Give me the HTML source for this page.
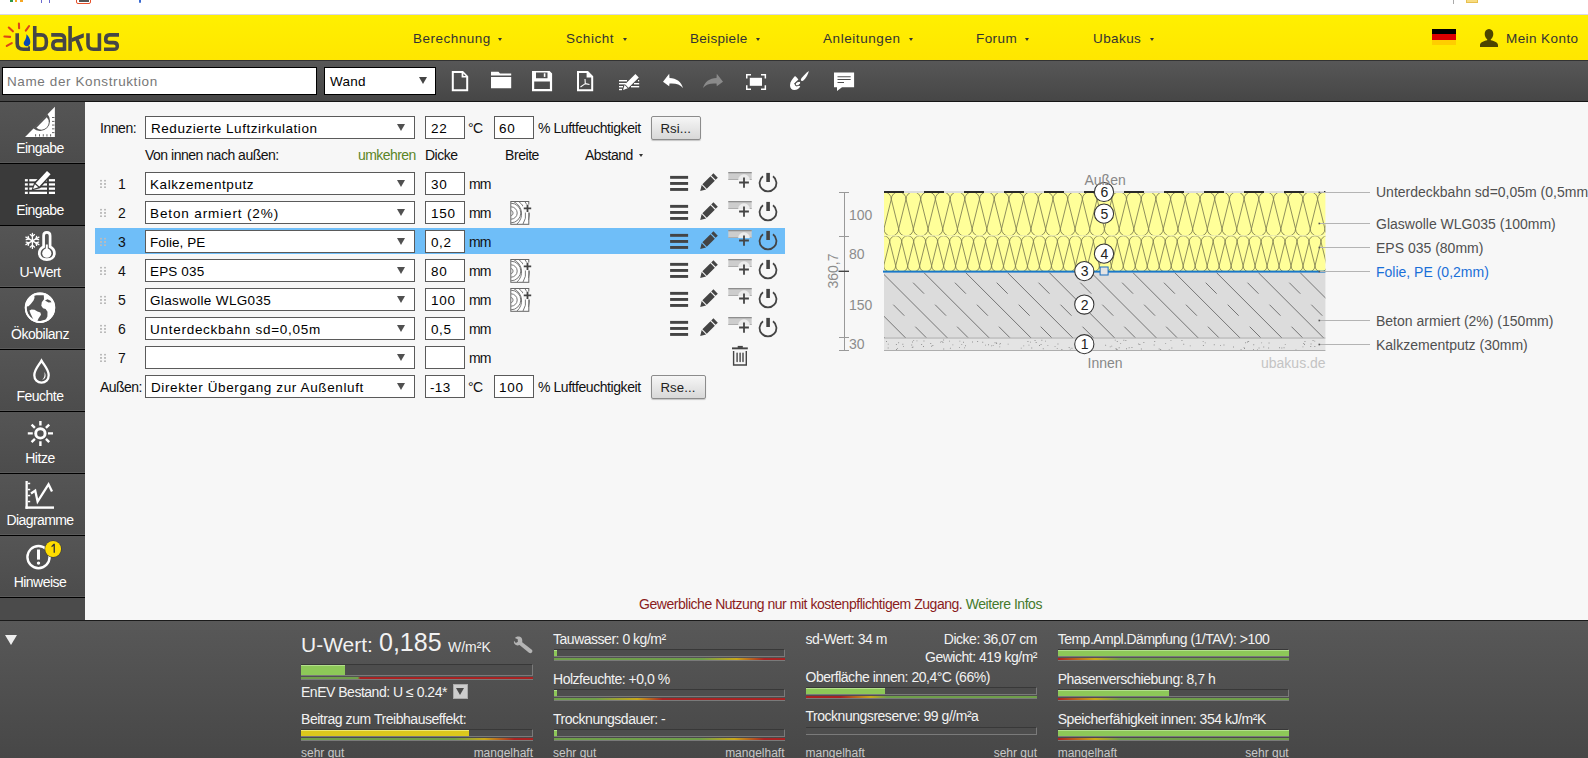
<!DOCTYPE html>
<html><head><meta charset="utf-8">
<style>
*{box-sizing:border-box;margin:0;padding:0}
html,body{width:1588px;height:758px;overflow:hidden;background:#f7f7f7;font-family:"Liberation Sans",sans-serif;position:relative}
.a{position:absolute}
.t{position:absolute;white-space:nowrap;line-height:1}
#top{left:0;top:0;width:1588px;height:15px;background:#fff;border-bottom:1px solid #d8d8e8}
#hdr{left:0;top:15px;width:1588px;height:45px;background:linear-gradient(#fff000,#ffe600)}
#tb{left:0;top:60px;width:1588px;height:42px;background:linear-gradient(#575757,#464646);border-top:1px solid #333;border-bottom:1px solid #151515}
#side{left:0;top:102px;width:85px;height:518px;background:#4b4b4b}
.si{position:absolute;left:0;width:85px;height:62px;background:linear-gradient(#555,#4c4c4c);border-bottom:1px solid #000;box-shadow:inset 0 -1px 0 #5a5a5a}
.si.act{background:#3a3a3a;box-shadow:none}
.sl{position:absolute;left:0;width:80px;text-align:center;color:#fff;font-size:13px;top:40px;line-height:1}
#bot{left:0;top:620px;width:1588px;height:138px;background:linear-gradient(#585858,#474747);border-top:1px solid #1a1a1a}
.nav{color:#333;font-size:13.5px;top:32.4px}
.car{position:absolute;width:0;height:0;border-left:2.5px solid transparent;border-right:2.5px solid transparent;border-top:3.2px solid #333}

.sel{position:absolute;left:145px;width:270px;height:23px;background:#fff;border:1px solid #5a5a5a}
.sel:after{content:"";position:absolute;left:251px;top:7px;width:0;height:0;border-left:4px solid transparent;border-right:4px solid transparent;border-top:7.5px solid #505050}
.inp{position:absolute;width:40px;height:23px;background:#fff;border:1px solid #5a5a5a}
.vd{font-size:13.5px;color:#000}
.ar{font-size:13px;color:#111}
.btn{position:absolute;height:24px;border:1px solid #8c8c8c;border-radius:2px;background:linear-gradient(#f6f6f6,#d8d8d8);box-shadow:0 1px 1px rgba(0,0,0,.2)}
.hl{position:absolute;left:95px;top:228px;width:690px;height:26px;background:#6fbef8}

.bt{color:#f2f2f2;font-size:13px}
.bs{color:#c8c8c8;font-size:12px}
.bar{position:absolute;background:#4d4d4d;border-top:1px solid #383838;border-right:1px solid #7a7a7a;border-bottom:1px solid #7a7a7a}
.fill{position:absolute;left:0;top:0;bottom:0;background:#8dc858;border-top:1px solid #b4e08c}
.gl{position:absolute;height:3px;border-bottom:1px solid #7a7a7a}
</style></head><body>
<div id="top" class="a"></div>
<div id="hdr" class="a"></div>
<div class="a" style="left:10px;top:0;width:2.6px;height:2px;background:#2e9a48"></div>
<div class="a" style="left:14.5px;top:0;width:2.6px;height:2px;background:#f5a623"></div>
<div class="a" style="left:19.8px;top:0;width:3px;height:2px;background:#f5a623"></div>
<div class="a" style="left:41.3px;top:0;width:1px;height:3px;background:#6a6ad0"></div>
<div class="a" style="left:49.4px;top:0;width:1px;height:3px;background:#6a6ad0"></div>
<div class="a" style="left:76.2px;top:-2px;width:15px;height:5.5px;border:1px solid #e8502a;border-radius:2px;background:#fff"></div>
<div class="a" style="left:78.5px;top:0;width:10px;height:1.6px;background:#555"></div>
<div class="a" style="left:139px;top:0;width:1.5px;height:3px;background:#3a6ad0;border-radius:0 0 1px 1px"></div>
<div class="a" style="left:1453px;top:0;width:1px;height:3.5px;background:#aaa"></div>
<div class="a" style="left:1466px;top:0;width:11.7px;height:2.7px;background:#f8dc80;border:1px solid #e8c050;border-top:0"></div>

<div id="tb" class="a"></div>
<div id="side" class="a">
  <div class="si" style="top:0"><div class="sl" id="sl1" style="top:39.15px;font-size:14px;letter-spacing:-0.525px">Eingabe</div></div>
  <div class="si act" style="top:62px"><div class="sl" id="sl2" style="top:39.15px;font-size:14px;letter-spacing:-0.525px">Eingabe</div></div>
  <div class="si" style="top:124px"><div class="sl" id="sl3" style="top:39.15px;font-size:14px;letter-spacing:-0.523px">U-Wert</div></div>
  <div class="si" style="top:186px"><div class="sl" id="sl4" style="top:39.15px;font-size:14px;letter-spacing:-0.495px">Ökobilanz</div></div>
  <div class="si" style="top:248px"><div class="sl" id="sl5" style="top:39.15px;font-size:14px;letter-spacing:-0.516px">Feuchte</div></div>
  <div class="si" style="top:310px"><div class="sl" id="sl6" style="top:39.15px;font-size:14px;letter-spacing:-0.456px">Hitze</div></div>
  <div class="si" style="top:372px"><div class="sl" id="sl7" style="top:39.15px;font-size:14px;letter-spacing:-0.575px">Diagramme</div></div>
  <div class="si" style="top:434px"><div class="sl" id="sl8" style="top:39.15px;font-size:14px;letter-spacing:-0.508px">Hinweise</div></div>
</div>
<div id="bot" class="a"></div>


<svg class="a" style="left:0;top:15px" width="130" height="45" viewBox="0 15 130 45">
 <g stroke="#dc4418" stroke-width="2.1" stroke-linecap="round" fill="none">
  <path d="M18.9 23.6 L19.1 28.2"/><path d="M29.1 26 L25.8 30.6"/><path d="M8.8 27.5 L12.9 31.3"/>
  <path d="M4.4 36.5 L10.1 36.9"/><path d="M6.8 45.9 L11.8 43.1"/>
 </g>
 <g stroke="#464646" stroke-width="3.6" fill="none">
  <path d="M17.2 33.3 V43.5 C17.2 47.8 19.8 49.2 23.5 49.2 H29.9"/>
  <path d="M34.75 26 V50.7"/>
  <path d="M34.75 34.9 H41 C45.5 34.9 46.4 37.5 46.4 42 C46.4 47 45 49.1 41 49.1 H34.75"/>
  <path d="M51.2 34.9 H60 C63.5 34.9 64.5 36.5 64.5 39 V50.7"/>
  <path d="M64.5 40.7 H56.8 C53.6 40.7 52.8 42.5 52.8 45 C52.8 48 54 49.1 57 49.1 H64.5"/>
  <path d="M70.1 26 V50.9"/>
  <path d="M77 39.6 L81.4 50.9"/>
  <path d="M88 33.3 V44 C88 48.3 90 49.2 93.5 49.2 H99.4"/>
  <path d="M99.4 33.3 V50.9"/>
  <path d="M119 34.9 H109.5 C106 34.9 105.7 37.5 105.7 39.2 C105.7 41.7 107 42.6 109.5 42.6 H113.5 C116.8 42.6 117.3 44.2 117.3 46 C117.3 48.4 116.5 49.2 113.5 49.2 H104"/>
 </g>
 <path fill="#464646" d="M28.1 46.3 H29.9 V50.7 H28.1Z M71.9 37.9 L83.8 33.2 L83.8 37.4 L71.9 41.9Z"/>
 <path fill="#0848b4" d="M26.4 34.2 C29 36.5 30.3 39.5 30.3 42 C30.3 44.6 28.8 46.2 27 46.2 C25 46.2 23.7 44.8 23.7 43.2 C23.7 41 26.8 39.5 26.4 34.2Z"/>
</svg>
<div class="a" style="left:1432px;top:29px;width:24px;height:16px;background:linear-gradient(#000 0,#000 33.3%,#dd0000 33.3%,#dd0000 66.6%,#ffce00 66.6%)"></div>
<svg class="a" style="left:1479px;top:28px" width="20" height="20" viewBox="0 0 20 20">
 <path fill="#4d4500" d="M10 1 C12.8 1 14.3 3.2 14.3 6 C14.3 8.6 13 10.6 11.8 11.3 L11.8 12.2 C15.5 13 18.8 14.3 19 17 L19 19 L1 19 L1 17 C1.2 14.3 4.5 13 8.2 12.2 L8.2 11.3 C7 10.6 5.7 8.6 5.7 6 C5.7 3.2 7.2 1 10 1Z"/>
</svg>



<!-- sidebar icons -->
<svg class="a" style="left:0;top:102px" width="85" height="518" viewBox="0 102 85 518">
 <!-- set square -->
 <path fill="#fff" d="M25.1 136.9 L54.9 106.8 V136.9Z"/>
 <path fill="#535353" d="M33.2 128.3 L47.4 114.1 A10.05 10.05 0 0 1 33.2 128.3Z"/>
 <path fill="#fff" d="M36.45 127.67 L46.77 117.35 A7.3 7.3 0 0 1 36.45 127.67Z"/>
 <g fill="#535353">
  <rect x="35.2" y="134.2" width="0.9" height="2.3"/><rect x="39" y="134.2" width="0.9" height="2.3"/><rect x="42.8" y="134.2" width="0.9" height="2.3"/><rect x="46.5" y="134.2" width="0.9" height="2.3"/><rect x="50.2" y="134.2" width="0.9" height="2.3"/>
  <rect x="52" y="117.1" width="2.5" height="0.9"/><rect x="52" y="120.9" width="2.5" height="0.9"/><rect x="52" y="124.6" width="2.5" height="0.9"/><rect x="52" y="128.4" width="2.5" height="0.9"/><rect x="52" y="132.2" width="2.5" height="0.9"/>
 </g>
 <!-- list pencil -->
 <g fill="#fff">
  <rect x="24.9" y="179.1" width="2.9" height="2.3"/><rect x="24.9" y="183.3" width="2.9" height="2.3"/><rect x="24.9" y="187.5" width="2.9" height="2.3"/><rect x="24.9" y="191.7" width="2.9" height="2.3"/>
  <rect x="29.3" y="179.1" width="17.7" height="2.3"/><rect x="29.3" y="183.3" width="17.7" height="2.3"/><rect x="29.3" y="187.5" width="17.7" height="2.3"/><rect x="29.3" y="191.7" width="17.7" height="2.3"/>
  <rect x="48.9" y="179.1" width="6.1" height="2.3"/><rect x="48.9" y="183.3" width="6.1" height="2.3"/><rect x="48.9" y="187.5" width="6.1" height="2.3"/><rect x="48.9" y="191.7" width="6.1" height="2.3"/>
 </g>
 <path fill="#393939" d="M47 169.5 L52.3 174.3 L40 188.2 L31.5 190.6 L34.3 182.3Z"/>
 <path fill="#fff" d="M47 171 L50.6 174.3 L39.3 186.5 L35.7 183.2Z M34.9 184.2 L38.3 187.3 L33 189Z"/>
 <!-- snowflake -->
 <g stroke="#fff" stroke-width="1.3" fill="none" stroke-linecap="round">
  <path d="M32.4 233.4 V248.4 M25.9 237.1 L38.9 244.6 M25.9 244.6 L38.9 237.1"/>
  <path d="M30.3 234.6 L32.4 236.4 L34.5 234.6 M30.3 247.1 L32.4 245.3 L34.5 247.1"/>
  <path d="M26.2 239.6 L28.9 239 L28.2 236.3 M36.6 236.3 L35.9 239 L38.6 239.6"/>
  <path d="M26.2 242.1 L28.9 242.7 L28.2 245.4 M36.6 245.4 L35.9 242.7 L38.6 242.1"/>
 </g>
 <!-- thermometer -->
 <path fill="none" stroke="#fff" stroke-width="2.7" d="M43.6 246.8 V235.7 C43.6 233.3 45 232.4 46.8 232.4 C48.6 232.4 50.1 233.3 50.1 235.7 V246.8 C52.8 248.3 54.4 250.6 54.4 253.2 C54.4 257.2 51 259.6 46.8 259.6 C42.6 259.6 39.3 257.2 39.3 253.2 C39.3 250.6 40.9 248.3 43.6 246.8Z"/>
 <circle cx="46.8" cy="253.2" r="4.6" fill="#fff"/>
 <rect x="45.8" y="244.5" width="2" height="6" fill="#fff"/>
 <!-- globe -->
 <circle cx="40" cy="307.7" r="15.2" fill="#fff"/>
 <path fill="#535353" d="M34.3 295.3 L43.8 295.3 L44 299.3 L41.8 302.2 L41.3 305.8 L43 308.3 L45.6 309 L47.5 311.8 L47.4 316.6 L45.8 319.5 L40 321.3 L37.2 321.5 L38.5 318.6 L41 314.8 L40.4 312.6 L37.5 311.4 L34.5 309.8 L31.5 309.5 L29.5 310.5 L30.5 313.5 L32.5 317.8 L33.5 319.5 L30 317 L27.5 313 L26.5 309 L26.6 306.5 L28.5 306.2 L30.8 304 L33.5 300.5 L34.5 298Z"/>
 <path fill="#535353" d="M45 300.5 L47.5 299.3 L50.5 300.8 L51.5 302.3 L48.5 302.5Z"/>
 <circle cx="40" cy="307.7" r="14.25" fill="none" stroke="#fff" stroke-width="1.9"/>
 <!-- drop -->
 <path fill="none" stroke="#fff" stroke-width="2.3" d="M41.5 360.6 C44 365.2 48.7 369.5 48.7 375.2 C48.7 379.6 45.5 382.7 41.5 382.7 C37.5 382.7 34.3 379.6 34.3 375.2 C34.3 369.5 39 365.2 41.5 360.6Z"/>
 <path fill="#fff" d="M44.4 372 C46.1 374.5 46.4 378.6 42.2 379.8 C44.5 377.8 45 375 44.4 372Z"/>
 <!-- sun -->
 <circle cx="40.4" cy="433.4" r="4.7" fill="none" stroke="#fff" stroke-width="2.9"/>
 <g stroke="#fff" stroke-width="2.4">
  <path d="M40.4 420.9 V425.6 M40.4 441.3 V446.1 M27.8 433.4 H32.8 M48 433.4 H53"/>
  <path d="M31.6 424.6 L34.9 427.9 M45.9 438.9 L49.2 442.2 M49.2 424.6 L45.9 427.9 M34.9 438.9 L31.6 442.2"/>
 </g>
 <!-- chart -->
 <g fill="#fff">
  <rect x="25.5" y="481" width="2.3" height="27.8"/><rect x="25.5" y="506.4" width="28.5" height="2.4"/>
  <rect x="27.8" y="482.7" width="2.4" height="1.5"/><rect x="27.8" y="488.8" width="2.4" height="1.5"/><rect x="27.8" y="494.8" width="2.4" height="1.5"/><rect x="27.8" y="500.8" width="2.4" height="1.5"/>
 </g>
 <path fill="none" stroke="#fff" stroke-width="2.3" stroke-linejoin="miter" d="M31 493.5 L35.2 490.6 L37.6 501.5 L48.5 484.3 L52 491.6"/>
 <!-- warning -->
 <circle cx="38.5" cy="557.1" r="11.1" fill="none" stroke="#fff" stroke-width="2.4"/>
 <rect x="37" y="549.5" width="3" height="10.1" fill="#fff"/>
 <circle cx="38.5" cy="563.1" r="1.7" fill="#fff"/>
 <circle cx="53.1" cy="549" r="8.6" fill="#3a3a3a"/>
 <circle cx="53.1" cy="549" r="8" fill="#ffdd00"/>
 <path fill="#333" d="M53.6 543.8 H54.9 V552.8 H53.6 V546 L51.5 547.3 V545.9Z"/>
</svg>

<!-- toolbar -->
<div class="a" style="left:2px;top:67px;width:315px;height:28px;background:#fff;border:1px solid #000"></div>
<div class="t vd" id="nameph" style="left:7px;top:74.8px;color:#777;letter-spacing:0.606px">Name der Konstruktion</div>
<div class="a" style="left:324px;top:67px;width:112px;height:28px;background:#fff;border:1px solid #000"></div>
<div class="t vd" id="wand" style="left:330px;top:74.8px;color:#000;letter-spacing:0.206px">Wand</div>
<div class="a" style="left:419px;top:77.2px;width:0;height:0;border-left:4.2px solid transparent;border-right:4.2px solid transparent;border-top:7.6px solid #444"></div>
<svg class="a" style="left:440px;top:60px" width="430" height="42" viewBox="440 60 430 42">
 <g fill="#fff">
  <!-- new doc -->
  <path d="M451.8 71 H463 L468.2 76.2 V91.2 H451.8Z M453.8 73 V89.2 H466.2 V77.6 H461.6 V73Z M463.4 73.6 V75.9 H465.7Z" fill-rule="evenodd"/>
  <!-- folder -->
  <path d="M491 71.8 H498.5 L500 73.6 H511.2 V75.6 H491Z M491 77 H511.2 V88.3 H491Z"/>
  <!-- save -->
  <path fill-rule="evenodd" d="M532 71.1 H549.6 L552.1 73.6 V91.2 H532Z M534.2 81.5 V89 H549.9 V81.5Z M536 72.6 V78.2 H547.5 V72.6Z"/>
  <rect x="543.8" y="73.3" width="1.6" height="3.6"/>
  <!-- pdf -->
  <path d="M577 71 H588 L593.2 76.2 V91.2 H577Z M579 73 V89.2 H591.2 V77.6 H586.6 V73Z" fill-rule="evenodd"/>
 </g>
 <g stroke="#fff" fill="none" stroke-width="1.1">
  <path d="M585 79 L585.3 83.6 L580.5 87 M585.3 83.6 L589.5 84.5"/>
 </g>
 <!-- edit lines -->
 <g fill="#fff">
  <rect x="619" y="80" width="8" height="1.4"/><rect x="619" y="83" width="7" height="1.4"/><rect x="619" y="86" width="4" height="1.4"/><rect x="619" y="88.8" width="3" height="1.4"/>
  <rect x="634" y="83" width="5.2" height="1.4"/><rect x="631" y="86" width="8.2" height="1.4"/><rect x="638" y="80" width="1.2" height="1.4"/>
  <path d="M635.4 74 L638.8 77.4 L628.5 87.7 L625.1 84.3Z M624.6 85 L627.8 88.2 L623 89.9Z"/>
  <!-- undo -->
  <path d="M663 81.8 L669.2 73.7 L669.5 77.9 C676.5 78 681.5 82 683 88 C680 84.5 676 83.2 669.5 83.6 L669.2 86.3Z"/>
  <!-- fullscreen -->
  <path d="M746 73.9 H751 V75.4 H747.5 V78.6 H746Z M761 73.9 H766.1 V78.6 H764.6 V75.4 H761Z M746 85.3 H747.5 V88.5 H751 V90 H746Z M764.6 85.3 H766.1 V90 H761 V88.5 H764.6Z"/>
  <rect x="749.8" y="77.8" width="12.2" height="8"/>
  <!-- brush -->
  <path d="M808.9 70.9 C808.3 73.8 806 77.8 803.4 80.6 C802.6 81.4 801.1 81.1 800.9 80.1 C800.8 79.3 801.1 78.6 801.6 78 C803.9 75.3 806.8 72.3 808.9 70.9Z"/>
  <path d="M795 76 C796.8 77.6 798 78.8 798.4 79.6 L794 83.8 L800.3 86.3 C799.3 88.7 797.1 90.1 794.4 90.1 C791.8 90.1 790 88 790 85.3 C790 81.5 792.8 78.5 795 76Z"/>
  <ellipse cx="798" cy="83.5" rx="3" ry="1.9" stroke="#4c4c4c" stroke-width="1" transform="rotate(-30 798 83.5)"/>
  <!-- comment -->
  <path fill-rule="evenodd" d="M834 72.6 H854.1 V87.3 H842 L837 91 V87.3 H834Z M837.5 76.2 V77.3 H850.7 V76.2Z M837.5 79 V80.1 H850.7 V79Z M837.5 82 V83.1 H844 V82Z"/>
 </g>
 <path fill="#8a8a8a" d="M723 81.8 L716.8 73.7 L716.5 77.9 C709.5 78 704.5 82 703 88 C706 84.5 710 83.2 716.5 83.6 L716.8 86.3Z"/>
</svg>

<!-- form -->
<div class="hl"></div>
<div class="t ar" id="lbl_innen" style="left:100px;top:121.15px;font-size:14px;letter-spacing:-0.461px">Innen:</div>
<div class="sel" style="top:116px"></div>
<div class="t vd" id="s_innen" style="left:151px;top:122px;letter-spacing:0.545px">Reduzierte Luftzirkulation</div>
<div class="inp" style="left:425px;top:116px"></div>
<div class="t vd" id="i_22" style="left:431px;top:122px;letter-spacing:0.742px">22</div>
<div class="t ar" id="c1" style="left:468px;top:121.15px;font-size:14px;letter-spacing:-0.562px">°C</div>
<div class="inp" style="left:494px;top:116px"></div>
<div class="t vd" id="i_60" style="left:499px;top:122px;letter-spacing:0.742px">60</div>
<div class="t ar" id="lf1" style="left:538px;top:121.15px;font-size:14px;letter-spacing:-0.439px">% Luftfeuchtigkeit</div>
<div class="btn" style="left:651px;top:116px;width:50px"></div>
<div class="t ar" id="rsi" style="left:660.5px;top:122.3px;font-size:13.2px;letter-spacing:0.1px;color:#222">Rsi...</div>
<div class="t ar" id="vin" style="left:145px;top:148.15px;font-size:14px;letter-spacing:-0.489px">Von innen nach außen:</div>
<div class="t ar" id="umk" style="left:358px;top:148.15px;color:#5b8526;font-size:14px;letter-spacing:-0.557px">umkehren</div>
<div class="t ar" id="dicke" style="left:425px;top:148.15px;font-size:14px;letter-spacing:-0.500px">Dicke</div>
<div class="t ar" id="breite" style="left:505px;top:148.15px;font-size:14px;letter-spacing:-0.435px">Breite</div>
<div class="t ar" id="abstand" style="left:585px;top:148.15px;font-size:14px;letter-spacing:-0.525px">Abstand</div>
<div class="car" style="left:639px;top:154px"></div>
<div class="a" style="left:99px;top:179px;width:8px;height:10px;background-image:radial-gradient(circle,#bbb 0.9px,transparent 1.1px);background-size:4px 3.3px"></div>
<div class="t ar" id="num1" style="left:118px;top:177.15px;font-size:14px;letter-spacing:-0.562px">1</div>
<div class="sel" style="top:172px"></div>
<div class="t vd" id="sname1" style="left:150px;top:178px;letter-spacing:0.582px">Kalkzementputz</div>
<div class="inp" style="left:425px;top:172px"></div>
<div class="t vd" id="val1" style="left:431px;top:178px;letter-spacing:0.742px">30</div>
<div class="t ar" id="mm1" style="left:469px;top:177.15px;font-size:14px;letter-spacing:-0.828px">mm</div>
<div class="a" style="left:99px;top:208px;width:8px;height:10px;background-image:radial-gradient(circle,#bbb 0.9px,transparent 1.1px);background-size:4px 3.3px"></div>
<div class="t ar" id="num2" style="left:118px;top:206.15px;font-size:14px;letter-spacing:-0.562px">2</div>
<div class="sel" style="top:201px"></div>
<div class="t vd" id="sname2" style="left:150px;top:207px;letter-spacing:0.873px">Beton armiert (2%)</div>
<div class="inp" style="left:425px;top:201px"></div>
<div class="t vd" id="val2" style="left:431px;top:207px;letter-spacing:0.754px">150</div>
<div class="t ar" id="mm2" style="left:469px;top:206.15px;font-size:14px;letter-spacing:-0.828px">mm</div>
<div class="a" style="left:99px;top:237px;width:8px;height:10px;background-image:radial-gradient(circle,#bbb 0.9px,transparent 1.1px);background-size:4px 3.3px"></div>
<div class="t ar" id="num3" style="left:118px;top:235.15px;font-size:14px;letter-spacing:-0.562px">3</div>
<div class="sel" style="top:230px"></div>
<div class="t vd" id="sname3" style="left:150px;top:236px;letter-spacing:0.068px">Folie, PE</div>
<div class="inp" style="left:425px;top:230px"></div>
<div class="t vd" id="val3" style="left:431px;top:236px;letter-spacing:0.607px">0,2</div>
<div class="t ar" id="mm3" style="left:469px;top:235.15px;font-size:14px;letter-spacing:-0.828px">mm</div>
<div class="a" style="left:99px;top:266px;width:8px;height:10px;background-image:radial-gradient(circle,#bbb 0.9px,transparent 1.1px);background-size:4px 3.3px"></div>
<div class="t ar" id="num4" style="left:118px;top:264.15px;font-size:14px;letter-spacing:-0.562px">4</div>
<div class="sel" style="top:259px"></div>
<div class="t vd" id="sname4" style="left:150px;top:265px;letter-spacing:0.143px">EPS 035</div>
<div class="inp" style="left:425px;top:259px"></div>
<div class="t vd" id="val4" style="left:431px;top:265px;letter-spacing:0.742px">80</div>
<div class="t ar" id="mm4" style="left:469px;top:264.15px;font-size:14px;letter-spacing:-0.828px">mm</div>
<div class="a" style="left:99px;top:295px;width:8px;height:10px;background-image:radial-gradient(circle,#bbb 0.9px,transparent 1.1px);background-size:4px 3.3px"></div>
<div class="t ar" id="num5" style="left:118px;top:293.15px;font-size:14px;letter-spacing:-0.562px">5</div>
<div class="sel" style="top:288px"></div>
<div class="t vd" id="sname5" style="left:150px;top:294px;letter-spacing:0.353px">Glaswolle WLG035</div>
<div class="inp" style="left:425px;top:288px"></div>
<div class="t vd" id="val5" style="left:431px;top:294px;letter-spacing:0.754px">100</div>
<div class="t ar" id="mm5" style="left:469px;top:293.15px;font-size:14px;letter-spacing:-0.828px">mm</div>
<div class="a" style="left:99px;top:324px;width:8px;height:10px;background-image:radial-gradient(circle,#bbb 0.9px,transparent 1.1px);background-size:4px 3.3px"></div>
<div class="t ar" id="num6" style="left:118px;top:322.15px;font-size:14px;letter-spacing:-0.562px">6</div>
<div class="sel" style="top:317px"></div>
<div class="t vd" id="sname6" style="left:150px;top:323px;letter-spacing:0.728px">Unterdeckbahn sd=0,05m</div>
<div class="inp" style="left:425px;top:317px"></div>
<div class="t vd" id="val6" style="left:431px;top:323px;letter-spacing:0.607px">0,5</div>
<div class="t ar" id="mm6" style="left:469px;top:322.15px;font-size:14px;letter-spacing:-0.828px">mm</div>
<div class="a" style="left:99px;top:353px;width:8px;height:10px;background-image:radial-gradient(circle,#bbb 0.9px,transparent 1.1px);background-size:4px 3.3px"></div>
<div class="t ar" id="num7" style="left:118px;top:351.15px;font-size:14px;letter-spacing:-0.562px">7</div>
<div class="sel" style="top:346px"></div>
<div class="inp" style="left:425px;top:346px"></div>
<div class="t ar" id="mm7" style="left:469px;top:351.15px;font-size:14px;letter-spacing:-0.828px">mm</div>
<div class="t ar" id="lbl_aussen" style="left:100px;top:380.15px;font-size:14px;letter-spacing:-0.536px">Außen:</div>
<div class="sel" style="top:375px"></div>
<div class="t vd" id="s_aussen" style="left:151px;top:381px;letter-spacing:0.625px">Direkter Übergang zur Außenluft</div>
<div class="inp" style="left:425px;top:375px"></div>
<div class="t vd" id="i_m13" style="left:430px;top:381px;letter-spacing:0.328px">-13</div>
<div class="t ar" id="c2" style="left:468px;top:380.15px;font-size:14px;letter-spacing:-0.562px">°C</div>
<div class="inp" style="left:494px;top:375px"></div>
<div class="t vd" id="i_100" style="left:499px;top:381px;letter-spacing:0.754px">100</div>
<div class="t ar" id="lf2" style="left:538px;top:380.15px;font-size:14px;letter-spacing:-0.439px">% Luftfeuchtigkeit</div>
<div class="btn" style="left:651px;top:375px;width:55px"></div>
<div class="t ar" id="rse" style="left:660.5px;top:381.3px;font-size:13.2px;letter-spacing:0.1px;color:#222">Rse...</div>

<svg width="0" height="0" style="position:absolute">
 <defs>
  <g id="ic_ham" fill="#444"><rect x="670.1" y="175.9" width="18" height="2.9"/><rect x="670.1" y="182" width="18" height="2.9"/><rect x="670.1" y="188" width="18" height="2.9"/></g>
  <g id="ic_pen" fill="#444"><path d="M700.20 190.90 L706.07 189.42 L701.68 185.03Z M706.78 188.71 L714.84 180.65 L710.45 176.26 L702.39 184.32Z M715.61 179.87 L717.81 177.68 L713.42 173.29 L711.23 175.49Z"/></g>
  <g id="ic_ins">
   <rect x="728.3" y="172.2" width="23.4" height="7.7" fill="#cdcdcd"/>
   <rect x="728.3" y="172" width="23.4" height="1.3" fill="#8e8e8e"/>
   <rect x="728.3" y="179" width="23.4" height="0.9" fill="#aaa"/>
   <path d="M738.2 180 A5.8 5.8 0 0 1 749.8 180Z" fill="#ececec"/>
   <path d="M739.1 182.5 H748.9 M744 177.4 V187.8" stroke="#444" stroke-width="1.8"/>
  </g>
  <g id="ic_pow" fill="none" stroke="#444" stroke-width="1.8">
   <path d="M763 176.3 A8.4 8.4 0 1 0 773 176.3"/>
   <rect x="766.3" y="172.9" width="3.6" height="9.1" fill="#444" stroke="none"/>
  </g>
  <g id="ic_wood">
   <rect x="510.8" y="201.5" width="18" height="22.8" fill="#fff" stroke="#666" stroke-width="1"/>
   <g fill="none" stroke="#777" stroke-width="1">
    <path d="M511 210.5 A2.6 2.6 0 0 1 511 215.6"/>
    <path d="M511 206.8 A6.2 6.2 0 0 1 511 219.2"/>
    <path d="M511 203.2 A9.8 9.8 0 0 1 511 222.8"/>
    <path d="M514 201.8 A13.4 13.4 0 0 1 517 224"/>
    <path d="M519 201.8 A16.5 16.5 0 0 1 523 224"/>
    <path d="M525 201.8 A20 20 0 0 1 528.5 220"/>
   </g>
   <rect x="523" y="204.5" width="8" height="8" fill="#f7f7f7"/>
   <path d="M523.8 208.4 H531.2 M527.5 204.7 V212.1" stroke="#444" stroke-width="1.8"/>
  </g>
 </defs>
</svg>
<svg class="a" style="left:0;top:0" width="1588" height="758" viewBox="0 0 1588 758">
<g transform="translate(0,0)"><use href="#ic_ham"/><use href="#ic_pen"/><use href="#ic_ins"/><use href="#ic_pow"/></g>
<g transform="translate(0,29)"><use href="#ic_ham"/><use href="#ic_pen"/><use href="#ic_ins"/><use href="#ic_pow"/></g>
<g transform="translate(0,58)"><use href="#ic_ham"/><use href="#ic_pen"/><use href="#ic_ins"/><use href="#ic_pow"/></g>
<g transform="translate(0,87)"><use href="#ic_ham"/><use href="#ic_pen"/><use href="#ic_ins"/><use href="#ic_pow"/></g>
<g transform="translate(0,116)"><use href="#ic_ham"/><use href="#ic_pen"/><use href="#ic_ins"/><use href="#ic_pow"/></g>
<g transform="translate(0,145)"><use href="#ic_ham"/><use href="#ic_pen"/><use href="#ic_ins"/><use href="#ic_pow"/></g>
<use href="#ic_wood" transform="translate(0,0)"/>
<use href="#ic_wood" transform="translate(0,58)"/>
<use href="#ic_wood" transform="translate(0,87)"/>
<g fill="#444"><rect x="732" y="347.4" width="15.8" height="1.9"/><rect x="737.7" y="345.9" width="5.1" height="2"/>
<path fill-rule="evenodd" d="M732.9 351 H734.3 V364.3 H745.6 V351 H747 V365.7 H732.9Z"/>
<rect x="736.4" y="352.4" width="1.4" height="9.8" rx="0.7"/><rect x="739.4" y="352.4" width="1.4" height="9.8" rx="0.7"/><rect x="742.3" y="352.4" width="1.4" height="9.8" rx="0.7"/></g>
</svg>
<!-- diagram -->
<svg class="a" style="left:800px;top:160px" width="788" height="220" viewBox="800 160 788 220">
<defs><clipPath id="cg"><rect x="884" y="192.8" width="441.4" height="43"/></clipPath><clipPath id="ce"><rect x="884" y="235.8" width="441.4" height="35.2"/></clipPath><clipPath id="cc"><rect x="884" y="272.5" width="441.4" height="65.5"/></clipPath></defs>
<rect x="884" y="192" width="441.4" height="80" fill="#ffff99"/>
<rect x="884" y="272" width="441.4" height="66" fill="#dcdcdc"/>
<rect x="884" y="338" width="441.4" height="12.6" fill="#e4e4e4"/>
<path clip-path="url(#cg)" fill="none" stroke="#7c7c52" stroke-width="0.85" d="M861.90 199.2 A7.35 7.35 0 0 1 876.60 199.2 M854.55 228.8 A7.35 7.35 0 0 0 869.25 228.8 M854.55 228.8 L861.90 199.2 L869.25 228.8 M876.60 199.2 A7.35 7.35 0 0 1 891.30 199.2 M869.25 228.8 A7.35 7.35 0 0 0 883.95 228.8 M869.25 228.8 L876.60 199.2 L883.95 228.8 M891.30 199.2 A7.35 7.35 0 0 1 906.00 199.2 M883.95 228.8 A7.35 7.35 0 0 0 898.65 228.8 M883.95 228.8 L891.30 199.2 L898.65 228.8 M906.00 199.2 A7.35 7.35 0 0 1 920.70 199.2 M898.65 228.8 A7.35 7.35 0 0 0 913.35 228.8 M898.65 228.8 L906.00 199.2 L913.35 228.8 M920.70 199.2 A7.35 7.35 0 0 1 935.40 199.2 M913.35 228.8 A7.35 7.35 0 0 0 928.05 228.8 M913.35 228.8 L920.70 199.2 L928.05 228.8 M935.40 199.2 A7.35 7.35 0 0 1 950.10 199.2 M928.05 228.8 A7.35 7.35 0 0 0 942.75 228.8 M928.05 228.8 L935.40 199.2 L942.75 228.8 M950.10 199.2 A7.35 7.35 0 0 1 964.80 199.2 M942.75 228.8 A7.35 7.35 0 0 0 957.45 228.8 M942.75 228.8 L950.10 199.2 L957.45 228.8 M964.80 199.2 A7.35 7.35 0 0 1 979.50 199.2 M957.45 228.8 A7.35 7.35 0 0 0 972.15 228.8 M957.45 228.8 L964.80 199.2 L972.15 228.8 M979.50 199.2 A7.35 7.35 0 0 1 994.20 199.2 M972.15 228.8 A7.35 7.35 0 0 0 986.85 228.8 M972.15 228.8 L979.50 199.2 L986.85 228.8 M994.20 199.2 A7.35 7.35 0 0 1 1008.90 199.2 M986.85 228.8 A7.35 7.35 0 0 0 1001.55 228.8 M986.85 228.8 L994.20 199.2 L1001.55 228.8 M1008.90 199.2 A7.35 7.35 0 0 1 1023.60 199.2 M1001.55 228.8 A7.35 7.35 0 0 0 1016.25 228.8 M1001.55 228.8 L1008.90 199.2 L1016.25 228.8 M1023.60 199.2 A7.35 7.35 0 0 1 1038.30 199.2 M1016.25 228.8 A7.35 7.35 0 0 0 1030.95 228.8 M1016.25 228.8 L1023.60 199.2 L1030.95 228.8 M1038.30 199.2 A7.35 7.35 0 0 1 1053.00 199.2 M1030.95 228.8 A7.35 7.35 0 0 0 1045.65 228.8 M1030.95 228.8 L1038.30 199.2 L1045.65 228.8 M1053.00 199.2 A7.35 7.35 0 0 1 1067.70 199.2 M1045.65 228.8 A7.35 7.35 0 0 0 1060.35 228.8 M1045.65 228.8 L1053.00 199.2 L1060.35 228.8 M1067.70 199.2 A7.35 7.35 0 0 1 1082.40 199.2 M1060.35 228.8 A7.35 7.35 0 0 0 1075.05 228.8 M1060.35 228.8 L1067.70 199.2 L1075.05 228.8 M1082.40 199.2 A7.35 7.35 0 0 1 1097.10 199.2 M1075.05 228.8 A7.35 7.35 0 0 0 1089.75 228.8 M1075.05 228.8 L1082.40 199.2 L1089.75 228.8 M1097.10 199.2 A7.35 7.35 0 0 1 1111.80 199.2 M1089.75 228.8 A7.35 7.35 0 0 0 1104.45 228.8 M1089.75 228.8 L1097.10 199.2 L1104.45 228.8 M1111.80 199.2 A7.35 7.35 0 0 1 1126.50 199.2 M1104.45 228.8 A7.35 7.35 0 0 0 1119.15 228.8 M1104.45 228.8 L1111.80 199.2 L1119.15 228.8 M1126.50 199.2 A7.35 7.35 0 0 1 1141.20 199.2 M1119.15 228.8 A7.35 7.35 0 0 0 1133.85 228.8 M1119.15 228.8 L1126.50 199.2 L1133.85 228.8 M1141.20 199.2 A7.35 7.35 0 0 1 1155.90 199.2 M1133.85 228.8 A7.35 7.35 0 0 0 1148.55 228.8 M1133.85 228.8 L1141.20 199.2 L1148.55 228.8 M1155.90 199.2 A7.35 7.35 0 0 1 1170.60 199.2 M1148.55 228.8 A7.35 7.35 0 0 0 1163.25 228.8 M1148.55 228.8 L1155.90 199.2 L1163.25 228.8 M1170.60 199.2 A7.35 7.35 0 0 1 1185.30 199.2 M1163.25 228.8 A7.35 7.35 0 0 0 1177.95 228.8 M1163.25 228.8 L1170.60 199.2 L1177.95 228.8 M1185.30 199.2 A7.35 7.35 0 0 1 1200.00 199.2 M1177.95 228.8 A7.35 7.35 0 0 0 1192.65 228.8 M1177.95 228.8 L1185.30 199.2 L1192.65 228.8 M1200.00 199.2 A7.35 7.35 0 0 1 1214.70 199.2 M1192.65 228.8 A7.35 7.35 0 0 0 1207.35 228.8 M1192.65 228.8 L1200.00 199.2 L1207.35 228.8 M1214.70 199.2 A7.35 7.35 0 0 1 1229.40 199.2 M1207.35 228.8 A7.35 7.35 0 0 0 1222.05 228.8 M1207.35 228.8 L1214.70 199.2 L1222.05 228.8 M1229.40 199.2 A7.35 7.35 0 0 1 1244.10 199.2 M1222.05 228.8 A7.35 7.35 0 0 0 1236.75 228.8 M1222.05 228.8 L1229.40 199.2 L1236.75 228.8 M1244.10 199.2 A7.35 7.35 0 0 1 1258.80 199.2 M1236.75 228.8 A7.35 7.35 0 0 0 1251.45 228.8 M1236.75 228.8 L1244.10 199.2 L1251.45 228.8 M1258.80 199.2 A7.35 7.35 0 0 1 1273.50 199.2 M1251.45 228.8 A7.35 7.35 0 0 0 1266.15 228.8 M1251.45 228.8 L1258.80 199.2 L1266.15 228.8 M1273.50 199.2 A7.35 7.35 0 0 1 1288.20 199.2 M1266.15 228.8 A7.35 7.35 0 0 0 1280.85 228.8 M1266.15 228.8 L1273.50 199.2 L1280.85 228.8 M1288.20 199.2 A7.35 7.35 0 0 1 1302.90 199.2 M1280.85 228.8 A7.35 7.35 0 0 0 1295.55 228.8 M1280.85 228.8 L1288.20 199.2 L1295.55 228.8 M1302.90 199.2 A7.35 7.35 0 0 1 1317.60 199.2 M1295.55 228.8 A7.35 7.35 0 0 0 1310.25 228.8 M1295.55 228.8 L1302.90 199.2 L1310.25 228.8 M1317.60 199.2 A7.35 7.35 0 0 1 1332.30 199.2 M1310.25 228.8 A7.35 7.35 0 0 0 1324.95 228.8 M1310.25 228.8 L1317.60 199.2 L1324.95 228.8 M1332.30 199.2 A7.35 7.35 0 0 1 1347.00 199.2 M1324.95 228.8 A7.35 7.35 0 0 0 1339.65 228.8 M1324.95 228.8 L1332.30 199.2 L1339.65 228.8"/>
<path clip-path="url(#ce)" fill="none" stroke="#7c7c52" stroke-width="0.85" d="M865.74 241.8 A5.99 5.99 0 0 1 877.72 241.8 M859.75 265.8 A5.99 5.99 0 0 0 871.73 265.8 M859.75 265.8 L865.74 241.8 L871.73 265.8 M877.72 241.8 A5.99 5.99 0 0 1 889.70 241.8 M871.73 265.8 A5.99 5.99 0 0 0 883.71 265.8 M871.73 265.8 L877.72 241.8 L883.71 265.8 M889.70 241.8 A5.99 5.99 0 0 1 901.68 241.8 M883.71 265.8 A5.99 5.99 0 0 0 895.69 265.8 M883.71 265.8 L889.70 241.8 L895.69 265.8 M901.68 241.8 A5.99 5.99 0 0 1 913.66 241.8 M895.69 265.8 A5.99 5.99 0 0 0 907.67 265.8 M895.69 265.8 L901.68 241.8 L907.67 265.8 M913.66 241.8 A5.99 5.99 0 0 1 925.64 241.8 M907.67 265.8 A5.99 5.99 0 0 0 919.65 265.8 M907.67 265.8 L913.66 241.8 L919.65 265.8 M925.64 241.8 A5.99 5.99 0 0 1 937.62 241.8 M919.65 265.8 A5.99 5.99 0 0 0 931.63 265.8 M919.65 265.8 L925.64 241.8 L931.63 265.8 M937.62 241.8 A5.99 5.99 0 0 1 949.60 241.8 M931.63 265.8 A5.99 5.99 0 0 0 943.61 265.8 M931.63 265.8 L937.62 241.8 L943.61 265.8 M949.60 241.8 A5.99 5.99 0 0 1 961.58 241.8 M943.61 265.8 A5.99 5.99 0 0 0 955.59 265.8 M943.61 265.8 L949.60 241.8 L955.59 265.8 M961.58 241.8 A5.99 5.99 0 0 1 973.56 241.8 M955.59 265.8 A5.99 5.99 0 0 0 967.57 265.8 M955.59 265.8 L961.58 241.8 L967.57 265.8 M973.56 241.8 A5.99 5.99 0 0 1 985.54 241.8 M967.57 265.8 A5.99 5.99 0 0 0 979.55 265.8 M967.57 265.8 L973.56 241.8 L979.55 265.8 M985.54 241.8 A5.99 5.99 0 0 1 997.52 241.8 M979.55 265.8 A5.99 5.99 0 0 0 991.53 265.8 M979.55 265.8 L985.54 241.8 L991.53 265.8 M997.52 241.8 A5.99 5.99 0 0 1 1009.50 241.8 M991.53 265.8 A5.99 5.99 0 0 0 1003.51 265.8 M991.53 265.8 L997.52 241.8 L1003.51 265.8 M1009.50 241.8 A5.99 5.99 0 0 1 1021.48 241.8 M1003.51 265.8 A5.99 5.99 0 0 0 1015.49 265.8 M1003.51 265.8 L1009.50 241.8 L1015.49 265.8 M1021.48 241.8 A5.99 5.99 0 0 1 1033.46 241.8 M1015.49 265.8 A5.99 5.99 0 0 0 1027.47 265.8 M1015.49 265.8 L1021.48 241.8 L1027.47 265.8 M1033.46 241.8 A5.99 5.99 0 0 1 1045.44 241.8 M1027.47 265.8 A5.99 5.99 0 0 0 1039.45 265.8 M1027.47 265.8 L1033.46 241.8 L1039.45 265.8 M1045.44 241.8 A5.99 5.99 0 0 1 1057.42 241.8 M1039.45 265.8 A5.99 5.99 0 0 0 1051.43 265.8 M1039.45 265.8 L1045.44 241.8 L1051.43 265.8 M1057.42 241.8 A5.99 5.99 0 0 1 1069.40 241.8 M1051.43 265.8 A5.99 5.99 0 0 0 1063.41 265.8 M1051.43 265.8 L1057.42 241.8 L1063.41 265.8 M1069.40 241.8 A5.99 5.99 0 0 1 1081.38 241.8 M1063.41 265.8 A5.99 5.99 0 0 0 1075.39 265.8 M1063.41 265.8 L1069.40 241.8 L1075.39 265.8 M1081.38 241.8 A5.99 5.99 0 0 1 1093.36 241.8 M1075.39 265.8 A5.99 5.99 0 0 0 1087.37 265.8 M1075.39 265.8 L1081.38 241.8 L1087.37 265.8 M1093.36 241.8 A5.99 5.99 0 0 1 1105.34 241.8 M1087.37 265.8 A5.99 5.99 0 0 0 1099.35 265.8 M1087.37 265.8 L1093.36 241.8 L1099.35 265.8 M1105.34 241.8 A5.99 5.99 0 0 1 1117.32 241.8 M1099.35 265.8 A5.99 5.99 0 0 0 1111.33 265.8 M1099.35 265.8 L1105.34 241.8 L1111.33 265.8 M1117.32 241.8 A5.99 5.99 0 0 1 1129.30 241.8 M1111.33 265.8 A5.99 5.99 0 0 0 1123.31 265.8 M1111.33 265.8 L1117.32 241.8 L1123.31 265.8 M1129.30 241.8 A5.99 5.99 0 0 1 1141.28 241.8 M1123.31 265.8 A5.99 5.99 0 0 0 1135.29 265.8 M1123.31 265.8 L1129.30 241.8 L1135.29 265.8 M1141.28 241.8 A5.99 5.99 0 0 1 1153.26 241.8 M1135.29 265.8 A5.99 5.99 0 0 0 1147.27 265.8 M1135.29 265.8 L1141.28 241.8 L1147.27 265.8 M1153.26 241.8 A5.99 5.99 0 0 1 1165.24 241.8 M1147.27 265.8 A5.99 5.99 0 0 0 1159.25 265.8 M1147.27 265.8 L1153.26 241.8 L1159.25 265.8 M1165.24 241.8 A5.99 5.99 0 0 1 1177.22 241.8 M1159.25 265.8 A5.99 5.99 0 0 0 1171.23 265.8 M1159.25 265.8 L1165.24 241.8 L1171.23 265.8 M1177.22 241.8 A5.99 5.99 0 0 1 1189.20 241.8 M1171.23 265.8 A5.99 5.99 0 0 0 1183.21 265.8 M1171.23 265.8 L1177.22 241.8 L1183.21 265.8 M1189.20 241.8 A5.99 5.99 0 0 1 1201.18 241.8 M1183.21 265.8 A5.99 5.99 0 0 0 1195.19 265.8 M1183.21 265.8 L1189.20 241.8 L1195.19 265.8 M1201.18 241.8 A5.99 5.99 0 0 1 1213.16 241.8 M1195.19 265.8 A5.99 5.99 0 0 0 1207.17 265.8 M1195.19 265.8 L1201.18 241.8 L1207.17 265.8 M1213.16 241.8 A5.99 5.99 0 0 1 1225.14 241.8 M1207.17 265.8 A5.99 5.99 0 0 0 1219.15 265.8 M1207.17 265.8 L1213.16 241.8 L1219.15 265.8 M1225.14 241.8 A5.99 5.99 0 0 1 1237.12 241.8 M1219.15 265.8 A5.99 5.99 0 0 0 1231.13 265.8 M1219.15 265.8 L1225.14 241.8 L1231.13 265.8 M1237.12 241.8 A5.99 5.99 0 0 1 1249.10 241.8 M1231.13 265.8 A5.99 5.99 0 0 0 1243.11 265.8 M1231.13 265.8 L1237.12 241.8 L1243.11 265.8 M1249.10 241.8 A5.99 5.99 0 0 1 1261.08 241.8 M1243.11 265.8 A5.99 5.99 0 0 0 1255.09 265.8 M1243.11 265.8 L1249.10 241.8 L1255.09 265.8 M1261.08 241.8 A5.99 5.99 0 0 1 1273.06 241.8 M1255.09 265.8 A5.99 5.99 0 0 0 1267.07 265.8 M1255.09 265.8 L1261.08 241.8 L1267.07 265.8 M1273.06 241.8 A5.99 5.99 0 0 1 1285.04 241.8 M1267.07 265.8 A5.99 5.99 0 0 0 1279.05 265.8 M1267.07 265.8 L1273.06 241.8 L1279.05 265.8 M1285.04 241.8 A5.99 5.99 0 0 1 1297.02 241.8 M1279.05 265.8 A5.99 5.99 0 0 0 1291.03 265.8 M1279.05 265.8 L1285.04 241.8 L1291.03 265.8 M1297.02 241.8 A5.99 5.99 0 0 1 1309.00 241.8 M1291.03 265.8 A5.99 5.99 0 0 0 1303.01 265.8 M1291.03 265.8 L1297.02 241.8 L1303.01 265.8 M1309.00 241.8 A5.99 5.99 0 0 1 1320.98 241.8 M1303.01 265.8 A5.99 5.99 0 0 0 1314.99 265.8 M1303.01 265.8 L1309.00 241.8 L1314.99 265.8 M1320.98 241.8 A5.99 5.99 0 0 1 1332.96 241.8 M1314.99 265.8 A5.99 5.99 0 0 0 1326.97 265.8 M1314.99 265.8 L1320.98 241.8 L1326.97 265.8 M1332.96 241.8 A5.99 5.99 0 0 1 1344.94 241.8 M1326.97 265.8 A5.99 5.99 0 0 0 1338.95 265.8 M1326.97 265.8 L1332.96 241.8 L1338.95 265.8"/>
<rect x="884" y="235.4" width="441.4" height="0.8" fill="#ffffc8"/>
<path clip-path="url(#cc)" fill="none" stroke="#5a5a5a" stroke-width="0.8" d="M756.6 272.5 L822.1 338 M798.4 272.5 L863.9 338 M840.2 272.5 L905.7 338 M882.0 272.5 L947.5 338 M923.8 272.5 L989.3 338 M965.6 272.5 L1031.1 338 M1007.4 272.5 L1072.9 338 M1049.2 272.5 L1114.7 338 M1091.0 272.5 L1156.5 338 M1132.8 272.5 L1198.3 338 M1174.6 272.5 L1240.1 338 M1216.4 272.5 L1281.9 338 M1258.2 272.5 L1323.7 338 M1300.0 272.5 L1365.5 338 M1341.8 272.5 L1407.3 338 M1383.6 272.5 L1449.1 338 M1425.4 272.5 L1490.9 338 M787.7 282.7 L798.7 293.7 M809.7 304.7 L820.7 315.7 M831.7 326.7 L842.7 337.7 M829.5 282.7 L840.5 293.7 M851.5 304.7 L862.5 315.7 M873.5 326.7 L884.5 337.7 M871.3 282.7 L882.3 293.7 M893.3 304.7 L904.3 315.7 M915.3 326.7 L926.3 337.7 M913.1 282.7 L924.1 293.7 M935.1 304.7 L946.1 315.7 M957.1 326.7 L968.1 337.7 M954.9 282.7 L965.9 293.7 M976.9 304.7 L987.9 315.7 M998.9 326.7 L1009.9 337.7 M996.7 282.7 L1007.7 293.7 M1018.7 304.7 L1029.7 315.7 M1040.7 326.7 L1051.7 337.7 M1038.5 282.7 L1049.5 293.7 M1060.5 304.7 L1071.5 315.7 M1082.5 326.7 L1093.5 337.7 M1080.3 282.7 L1091.3 293.7 M1102.3 304.7 L1113.3 315.7 M1124.3 326.7 L1135.3 337.7 M1122.1 282.7 L1133.1 293.7 M1144.1 304.7 L1155.1 315.7 M1166.1 326.7 L1177.1 337.7 M1163.9 282.7 L1174.9 293.7 M1185.9 304.7 L1196.9 315.7 M1207.9 326.7 L1218.9 337.7 M1205.7 282.7 L1216.7 293.7 M1227.7 304.7 L1238.7 315.7 M1249.7 326.7 L1260.7 337.7 M1247.5 282.7 L1258.5 293.7 M1269.5 304.7 L1280.5 315.7 M1291.5 326.7 L1302.5 337.7 M1289.3 282.7 L1300.3 293.7 M1311.3 304.7 L1322.3 315.7 M1333.3 326.7 L1344.3 337.7 M1331.1 282.7 L1342.1 293.7 M1353.1 304.7 L1364.1 315.7 M1375.1 326.7 L1386.1 337.7 M1372.9 282.7 L1383.9 293.7 M1394.9 304.7 L1405.9 315.7 M1416.9 326.7 L1427.9 337.7 M1414.7 282.7 L1425.7 293.7 M1436.7 304.7 L1447.7 315.7 M1458.7 326.7 L1469.7 337.7 M1456.5 282.7 L1467.5 293.7 M1478.5 304.7 L1489.5 315.7 M1500.5 326.7 L1511.5 337.7"/>
<path fill="#8a8a8a" d="M1027.5 341.0h0.9v0.9h-0.9z M1170.5 340.2h0.9v0.9h-0.9z M1120.2 343.2h0.9v0.9h-0.9z M911.3 344.6h0.9v0.9h-0.9z M902.4 343.8h0.9v0.9h-0.9z M916.5 340.4h0.9v0.9h-0.9z M1071.5 347.8h0.9v0.9h-0.9z M940.1 341.7h0.9v0.9h-0.9z M1160.2 349.0h0.9v0.9h-0.9z M1138.2 343.5h0.9v0.9h-0.9z M1312.6 340.0h0.9v0.9h-0.9z M1261.2 342.4h0.9v0.9h-0.9z M949.0 340.7h0.9v0.9h-0.9z M1020.8 347.7h0.9v0.9h-0.9z M965.0 345.3h0.9v0.9h-0.9z M1165.2 343.2h0.9v0.9h-0.9z M1125.4 340.1h0.9v0.9h-0.9z M912.0 341.6h0.9v0.9h-0.9z M1183.3 343.8h0.9v0.9h-0.9z M1023.3 345.4h0.9v0.9h-0.9z M1084.0 342.5h0.9v0.9h-0.9z M1233.1 346.5h0.9v0.9h-0.9z M992.7 345.2h0.9v0.9h-0.9z M1115.5 348.3h0.9v0.9h-0.9z M1204.8 342.4h0.9v0.9h-0.9z M1314.3 340.7h0.9v0.9h-0.9z M1068.7 347.1h0.9v0.9h-0.9z M952.4 344.4h0.9v0.9h-0.9z M903.1 346.2h0.9v0.9h-0.9z M1220.1 345.2h0.9v0.9h-0.9z M1268.6 342.6h0.9v0.9h-0.9z M1189.8 345.4h0.9v0.9h-0.9z M1139.4 344.1h0.9v0.9h-0.9z M1253.1 348.9h0.9v0.9h-0.9z M1093.2 346.1h0.9v0.9h-0.9z M912.5 346.5h0.9v0.9h-0.9z M1168.8 349.4h0.9v0.9h-0.9z M1245.2 342.3h0.9v0.9h-0.9z M1054.6 346.2h0.9v0.9h-0.9z M895.9 344.1h0.9v0.9h-0.9z M959.4 340.7h0.9v0.9h-0.9z M911.8 347.2h0.9v0.9h-0.9z M942.5 342.0h0.9v0.9h-0.9z M1056.8 348.2h0.9v0.9h-0.9z M921.2 344.0h0.9v0.9h-0.9z M1126.1 348.3h0.9v0.9h-0.9z M1244.0 348.1h0.9v0.9h-0.9z M1007.7 343.7h0.9v0.9h-0.9z M1042.8 348.3h0.9v0.9h-0.9z M1304.5 341.0h0.9v0.9h-0.9z M963.0 341.8h0.9v0.9h-0.9z M988.0 344.3h0.9v0.9h-0.9z M1143.4 342.1h0.9v0.9h-0.9z M887.8 343.7h0.9v0.9h-0.9z M1047.4 345.2h0.9v0.9h-0.9z M1302.5 346.4h0.9v0.9h-0.9z M1111.3 345.7h0.9v0.9h-0.9z M1181.5 340.0h0.9v0.9h-0.9z M1279.1 347.3h0.9v0.9h-0.9z M1268.2 347.5h0.9v0.9h-0.9z M1057.5 343.5h0.9v0.9h-0.9z M931.2 345.8h0.9v0.9h-0.9z M913.2 340.2h0.9v0.9h-0.9z M977.2 341.1h0.9v0.9h-0.9z M1034.6 340.0h0.9v0.9h-0.9z M886.1 341.0h0.9v0.9h-0.9z M930.3 343.1h0.9v0.9h-0.9z M897.1 348.2h0.9v0.9h-0.9z M1154.3 341.0h0.9v0.9h-0.9z M996.2 343.0h0.9v0.9h-0.9z M1045.1 340.7h0.9v0.9h-0.9z M1257.0 349.4h0.9v0.9h-0.9z M1089.6 344.3h0.9v0.9h-0.9z M923.5 340.5h0.9v0.9h-0.9z M1035.7 342.1h0.9v0.9h-0.9z M1248.2 341.1h0.9v0.9h-0.9z M896.1 349.0h0.9v0.9h-0.9z M1116.8 341.0h0.9v0.9h-0.9z M1123.4 339.8h0.9v0.9h-0.9z M1116.8 349.3h0.9v0.9h-0.9z M1263.3 346.5h0.9v0.9h-0.9z M1000.1 343.2h0.9v0.9h-0.9z M959.0 347.2h0.9v0.9h-0.9z M1118.7 347.3h0.9v0.9h-0.9z M1030.1 341.7h0.9v0.9h-0.9z M1240.6 349.3h0.9v0.9h-0.9z M1258.6 347.6h0.9v0.9h-0.9z M1243.6 346.9h0.9v0.9h-0.9z M985.1 344.7h0.9v0.9h-0.9z M1041.4 339.8h0.9v0.9h-0.9z M898.2 342.3h0.9v0.9h-0.9z M999.3 346.4h0.9v0.9h-0.9z M1304.0 344.0h0.9v0.9h-0.9z M1295.5 349.4h0.9v0.9h-0.9z M1303.3 343.1h0.9v0.9h-0.9z M982.3 341.8h0.9v0.9h-0.9z M972.0 341.5h0.9v0.9h-0.9z M1158.7 348.5h0.9v0.9h-0.9z M1253.3 344.3h0.9v0.9h-0.9z M1171.4 347.5h0.9v0.9h-0.9z M923.0 346.1h0.9v0.9h-0.9z M1283.6 347.3h0.9v0.9h-0.9z M1213.8 344.3h0.9v0.9h-0.9z M964.0 347.4h0.9v0.9h-0.9z M1031.3 347.5h0.9v0.9h-0.9z M1310.6 343.5h0.9v0.9h-0.9z M1061.4 349.0h0.9v0.9h-0.9z M1202.7 341.2h0.9v0.9h-0.9z M941.5 341.0h0.9v0.9h-0.9z M1281.4 347.6h0.9v0.9h-0.9z M949.9 347.8h0.9v0.9h-0.9z M1314.4 346.1h0.9v0.9h-0.9z M1039.1 345.0h0.9v0.9h-0.9z M943.2 339.6h0.9v0.9h-0.9z M1310.3 346.0h0.9v0.9h-0.9z M1116.1 348.8h0.9v0.9h-0.9z M1075.6 348.2h0.9v0.9h-0.9z M1247.0 341.6h0.9v0.9h-0.9z M996.1 342.4h0.9v0.9h-0.9z M991.1 345.4h0.9v0.9h-0.9z M999.3 343.7h0.9v0.9h-0.9z M943.3 348.6h0.9v0.9h-0.9z M1040.6 344.1h0.9v0.9h-0.9z M1140.9 348.5h0.9v0.9h-0.9z M1069.8 348.7h0.9v0.9h-0.9z M1105.2 344.8h0.9v0.9h-0.9z M1114.8 339.7h0.9v0.9h-0.9z M1078.3 341.3h0.9v0.9h-0.9z M887.7 347.5h0.9v0.9h-0.9z M961.3 344.2h0.9v0.9h-0.9z M1202.9 345.1h0.9v0.9h-0.9z M1028.5 344.7h0.9v0.9h-0.9z M1128.7 347.3h0.9v0.9h-0.9z M932.4 345.1h0.9v0.9h-0.9z M994.6 342.3h0.9v0.9h-0.9z M1223.5 344.6h0.9v0.9h-0.9z M1131.5 347.1h0.9v0.9h-0.9z M1284.8 343.9h0.9v0.9h-0.9z M1153.7 344.6h0.9v0.9h-0.9z M1109.8 346.4h0.9v0.9h-0.9z"/>
<rect x="884" y="337.6" width="441.4" height="0.9" fill="#a8a8a8"/>
<rect x="884" y="350" width="441.4" height="0.9" fill="#a8a8a8"/>
<rect x="883" y="270.6" width="442.4" height="2" fill="#1a78c8"/>
<rect x="884" y="191" width="20.0" height="2" fill="#2a2a2a"/>
<rect x="904" y="191" width="20.0" height="2" fill="#ddd"/>
<rect x="924" y="191" width="20.0" height="2" fill="#2a2a2a"/>
<rect x="944" y="191" width="20.0" height="2" fill="#ddd"/>
<rect x="964" y="191" width="20.0" height="2" fill="#2a2a2a"/>
<rect x="984" y="191" width="20.0" height="2" fill="#ddd"/>
<rect x="1004" y="191" width="20.0" height="2" fill="#2a2a2a"/>
<rect x="1024" y="191" width="20.0" height="2" fill="#ddd"/>
<rect x="1044" y="191" width="20.0" height="2" fill="#2a2a2a"/>
<rect x="1064" y="191" width="20.0" height="2" fill="#ddd"/>
<rect x="1084" y="191" width="20.0" height="2" fill="#2a2a2a"/>
<rect x="1104" y="191" width="20.0" height="2" fill="#ddd"/>
<rect x="1124" y="191" width="20.0" height="2" fill="#2a2a2a"/>
<rect x="1144" y="191" width="20.0" height="2" fill="#ddd"/>
<rect x="1164" y="191" width="20.0" height="2" fill="#2a2a2a"/>
<rect x="1184" y="191" width="20.0" height="2" fill="#ddd"/>
<rect x="1204" y="191" width="20.0" height="2" fill="#2a2a2a"/>
<rect x="1224" y="191" width="20.0" height="2" fill="#ddd"/>
<rect x="1244" y="191" width="20.0" height="2" fill="#2a2a2a"/>
<rect x="1264" y="191" width="20.0" height="2" fill="#ddd"/>
<rect x="1284" y="191" width="20.0" height="2" fill="#2a2a2a"/>
<rect x="1304" y="191" width="20.0" height="2" fill="#ddd"/>
<rect x="1324" y="191" width="1.4" height="2" fill="#2a2a2a"/>
<rect x="1344" y="191" width="0.0" height="2" fill="#ddd"/>
<g stroke="#999" stroke-width="1" fill="none"><path d="M844.5 192 V351"/><path d="M839 192.5 H849 M839 236.5 H849 M839 337.5 H849 M839 350.5 H849"/></g><rect x="838.5" y="270.6" width="10.5" height="1.4" fill="#444"/>
<rect x="1319" y="192.0" width="51" height="1" fill="#b4b4b4"/>
<rect x="1318.5" y="191.7" width="1.6" height="1.6" fill="#555"/>
<rect x="1319" y="223.0" width="51" height="1" fill="#b4b4b4"/>
<rect x="1318.5" y="222.7" width="1.6" height="1.6" fill="#555"/>
<rect x="1319" y="247.0" width="51" height="1" fill="#b4b4b4"/>
<rect x="1318.5" y="246.7" width="1.6" height="1.6" fill="#555"/>
<rect x="1319" y="271.0" width="51" height="1" fill="#b4b4b4"/>
<rect x="1318.5" y="270.7" width="1.6" height="1.6" fill="#555"/>
<rect x="1319" y="320.0" width="51" height="1" fill="#b4b4b4"/>
<rect x="1318.5" y="319.7" width="1.6" height="1.6" fill="#555"/>
<rect x="1319" y="344.0" width="51" height="1" fill="#b4b4b4"/>
<rect x="1318.5" y="343.7" width="1.6" height="1.6" fill="#555"/>
<circle cx="1104.0" cy="192" r="9.6" fill="#fff" stroke="#333" stroke-width="1.05"/>
<circle cx="1104.0" cy="213.7" r="9.6" fill="#fff" stroke="#333" stroke-width="1.05"/>
<circle cx="1104.0" cy="253.7" r="9.6" fill="#fff" stroke="#333" stroke-width="1.05"/>
<circle cx="1084.3" cy="271.1" r="9.6" fill="#fff" stroke="#333" stroke-width="1.05"/>
<circle cx="1084.3" cy="304.5" r="9.6" fill="#fff" stroke="#333" stroke-width="1.05"/>
<circle cx="1084.3" cy="344.2" r="9.6" fill="#fff" stroke="#333" stroke-width="1.05"/>
<rect x="1100.1" y="267" width="8" height="8" fill="#e4e4e4" stroke="#1a6fc0" stroke-width="1"/>
</svg>
<div class="t" id="d100" style="left:849px;top:207.7px;font-size:14px;color:#8c8c8c">100</div>
<div class="t" id="d80" style="left:849px;top:246.8px;font-size:14px;color:#8c8c8c">80</div>
<div class="t" id="d150" style="left:849px;top:297.5px;font-size:14px;color:#8c8c8c">150</div>
<div class="t" id="d30" style="left:849px;top:336.8px;font-size:14px;color:#8c8c8c">30</div>
<div class="t" id="d360" style="left:813px;top:264px;font-size:14px;color:#8c8c8c;transform:rotate(-90deg);transform-origin:50% 50%;width:40px;text-align:center">360,7</div>
<div class="t" id="aussenlbl" style="left:1084.5px;top:172.8px;font-size:14px;color:#888">Außen</div>
<div class="t" id="innenlbl" style="left:1087.5px;top:355.5px;font-size:14px;color:#888">Innen</div>
<div class="t" id="ubde" style="left:1261px;top:355.5px;font-size:14px;color:#c4c4c4">ubakus.de</div>
<div class="t" style="left:1094.4px;top:185.1px;width:20px;text-align:center;font-size:14px;color:#222">6</div>
<div class="t" style="left:1094.4px;top:206.8px;width:20px;text-align:center;font-size:14px;color:#222">5</div>
<div class="t" style="left:1094.4px;top:246.8px;width:20px;text-align:center;font-size:14px;color:#222">4</div>
<div class="t" style="left:1074.7px;top:264.2px;width:20px;text-align:center;font-size:14px;color:#222">3</div>
<div class="t" style="left:1074.7px;top:297.6px;width:20px;text-align:center;font-size:14px;color:#222">2</div>
<div class="t" style="left:1074.7px;top:337.3px;width:20px;text-align:center;font-size:14px;color:#222">1</div>
<div class="t" id="lab1" style="left:1376px;top:185.1px;font-size:14px;color:#505050">Unterdeckbahn sd=0,05m (0,5mm)</div>
<div class="t" id="lab2" style="left:1376px;top:216.8px;font-size:14px;color:#505050">Glaswolle WLG035 (100mm)</div>
<div class="t" id="lab3" style="left:1376px;top:241.2px;font-size:14px;color:#505050">EPS 035 (80mm)</div>
<div class="t" id="lab4" style="left:1376px;top:265.0px;font-size:14px;color:#1a6fd8">Folie, PE (0,2mm)</div>
<div class="t" id="lab5" style="left:1376px;top:314.3px;font-size:14px;color:#505050">Beton armiert (2%) (150mm)</div>
<div class="t" id="lab6" style="left:1376px;top:338.1px;font-size:14px;color:#505050">Kalkzementputz (30mm)</div>
<!-- /diagram -->
<!-- bottom -->
<div class="t" id="gew" style="left:639px;top:597.15px;color:#8a1c1c;font-size:14px;letter-spacing:-0.463px">Gewerbliche Nutzung nur mit kostenpflichtigem Zugang. <span style="color:#457a2c">Weitere Infos</span></div>
<div class="a" style="left:5px;top:635px;width:0;height:0;border-left:6.5px solid transparent;border-right:6.5px solid transparent;border-top:10.5px solid #eee"></div>
<div class="t bt" id="uw1" style="left:301px;top:633.8px;font-size:21px">U-Wert:</div>
<div class="t bt" id="uw2" style="left:379px;top:630.4px;font-size:25px">0,185</div>
<div class="t bt" id="uw3" style="left:448px;top:639.7px;font-size:14px">W/m²K</div>
<div class="bar" style="left:301px;top:664px;width:232px;height:12px"><div class="fill" style="width:44px;"></div></div>
<div class="gl" style="left:301px;top:677px;width:232px;background:linear-gradient(90deg,#6f9f4a 0,#6f9f4a 24.5%,#a82222 25.5%,#a82222)"></div>
<div class="t bt" id="enev" style="left:301px;top:684.55px;font-size:14px;letter-spacing:-0.488px">EnEV Bestand: U ≤ 0.24*</div>
<div class="a" style="left:452.5px;top:683.5px;width:15px;height:15px;background:#cdcdcd;border:1px solid #aaa"></div>
<div class="a" style="left:456px;top:688px;width:0;height:0;border-left:4px solid transparent;border-right:4px solid transparent;border-top:7.2px solid #4a4a4a"></div>
<div class="t bt" id="beit" style="left:301px;top:712.35px;font-size:14px;letter-spacing:-0.454px">Beitrag zum Treibhauseffekt:</div>
<div class="bar" style="left:301px;top:729px;width:232px;height:8px"><div class="fill" style="width:168px;background:#dcc81c;border-top-color:#f0e870;"></div></div>
<div class="gl" style="left:301px;top:738px;width:232px;background:linear-gradient(90deg,#6f9f4a 0,#6f9f4a 66%,#c8a81a 79%,#a82222 92%,#a82222)"></div>
<div class="t bs" id="sg1" style="left:301px;top:746.8px;">sehr gut</div>
<div class="t bs" id="mh1" style="right:1055px;top:746.8px;">mangelhaft</div>
<div class="t bt" id="tau" style="left:553px;top:632.15px;font-size:14px;letter-spacing:-0.482px">Tauwasser: 0 kg/m²</div>
<div class="bar" style="left:553.5px;top:649px;width:231.0px;height:8px"><div class="fill" style="width:3px;"></div></div>
<div class="gl" style="left:553.5px;top:658px;width:231.0px;background:linear-gradient(90deg,#6f9f4a 0,#6f9f4a 64%,#c8a81a 79%,#a82222 91%,#a82222)"></div>
<div class="t bt" id="holz" style="left:553px;top:671.65px;font-size:14px;letter-spacing:-0.472px">Holzfeuchte: +0,0 %</div>
<div class="bar" style="left:553.5px;top:689px;width:231.0px;height:8px"><div class="fill" style="width:3px;"></div></div>
<div class="gl" style="left:553.5px;top:698px;width:231.0px;background:linear-gradient(90deg,#6f9f4a 0,#6f9f4a 18%,#c8a81a 36%,#a82222 47%,#a82222)"></div>
<div class="t bt" id="trock" style="left:553px;top:712.35px;font-size:14px;letter-spacing:-0.480px">Trocknungsdauer: -</div>
<div class="bar" style="left:553.5px;top:729px;width:231.0px;height:8px"><div class="fill" style="width:3px;"></div></div>
<div class="gl" style="left:553.5px;top:738px;width:231.0px;background:linear-gradient(90deg,#6f9f4a 0,#6f9f4a 63%,#c8a81a 78%,#a82222 91%,#a82222)"></div>
<div class="t bs" id="sg2" style="left:553px;top:746.8px;">sehr gut</div>
<div class="t bs" id="mh2" style="right:803.5px;top:746.8px;">mangelhaft</div>
<div class="t bt" id="sdw" style="left:805.5px;top:632.15px;font-size:14px;letter-spacing:-0.482px">sd-Wert: 34 m</div>
<div class="t bt" id="dik" style="right:551px;top:632.15px;font-size:14px;letter-spacing:-0.478px">Dicke: 36,07 cm</div>
<div class="t bt" id="gew2" style="right:551px;top:649.55px;font-size:14px;letter-spacing:-0.478px">Gewicht: 419 kg/m²</div>
<div class="t bt" id="ober" style="left:805.5px;top:669.85px;font-size:14px;letter-spacing:-0.473px">Oberfläche innen: 20,4°C (66%)</div>
<div class="bar" style="left:805.5px;top:687px;width:231.5px;height:8px"><div class="fill" style="width:79px;"></div></div>
<div class="gl" style="left:805.5px;top:696px;width:231.5px;background:linear-gradient(90deg,#a82222 0,#a82222 15%,#c8a81a 28%,#6f9f4a 35%,#6f9f4a)"></div>
<div class="t bt" id="tres" style="left:805.5px;top:709.15px;font-size:14px;letter-spacing:-0.475px">Trocknungsreserve: 99 g//m²a</div>
<div class="bar" style="left:805.5px;top:727px;width:231.5px;height:8px"></div>
<div class="t bs" id="mh3" style="left:805.5px;top:746.8px;">mangelhaft</div>
<div class="t bs" id="sg3" style="right:551px;top:746.8px;">sehr gut</div>
<div class="t bt" id="temp" style="left:1057.7px;top:632.15px;font-size:14px;letter-spacing:-0.508px">Temp.Ampl.Dämpfung (1/TAV): &gt;100</div>
<div class="bar" style="left:1057.7px;top:649px;width:231.0px;height:8px"><div class="fill" style="width:231px;"></div></div>
<div class="gl" style="left:1057.7px;top:658px;width:231.0px;background:linear-gradient(90deg,#a82222 0,#c8a81a 16%,#6f9f4a 27%,#6f9f4a)"></div>
<div class="t bt" id="phas" style="left:1057.7px;top:672.15px;font-size:14px;letter-spacing:-0.485px">Phasenverschiebung: 8,7 h</div>
<div class="bar" style="left:1057.7px;top:689px;width:231.0px;height:8px"><div class="fill" style="width:111.4px;"></div></div>
<div class="gl" style="left:1057.7px;top:698px;width:231.0px;background:linear-gradient(90deg,#a82222 0,#c8a81a 16%,#6f9f4a 27%,#6f9f4a)"></div>
<div class="t bt" id="speich" style="left:1057.7px;top:712.15px;font-size:14px;letter-spacing:-0.457px">Speicherfähigkeit innen: 354 kJ/m²K</div>
<div class="bar" style="left:1057.7px;top:729px;width:231.0px;height:8px"><div class="fill" style="width:231px;"></div></div>
<div class="gl" style="left:1057.7px;top:738px;width:231.0px;background:linear-gradient(90deg,#a82222 0,#c8a81a 16%,#6f9f4a 27%,#6f9f4a)"></div>
<div class="t bs" id="mh4" style="left:1057.7px;top:746.8px;">mangelhaft</div>
<div class="t bs" id="sg4" style="right:299.29999999999995px;top:746.8px;">sehr gut</div>
<svg class="a" style="left:510px;top:635px" width="24" height="20" viewBox="510 635 24 20"><g transform="translate(1045.5,-0.5) scale(-1,1)"><path fill="#b4b4b4" d="M525.5 637.3 C527.5 636.6 529.8 637.2 530.6 638.6 L527.8 639.8 L527.6 642.2 L529.6 643.4 L531.5 641.3 C532.1 643.5 530.8 645.6 528.3 645.9 C527.4 646 526.6 645.8 526 645.5 L516.5 653.2 C515.6 654 514.2 653.7 513.5 652.8 C512.8 651.9 513 650.6 514 650 L523.3 642.8 C522.8 640.3 523.6 638 525.5 637.3Z"/></g></svg>
<!-- header nav -->
<div class="t nav" id="nav1" style="left:413px;letter-spacing:0.499px">Berechnung</div>
<div class="t nav" id="nav2" style="left:566px;letter-spacing:0.547px">Schicht</div>
<div class="t nav" id="nav3" style="left:690px;letter-spacing:0.302px">Beispiele</div>
<div class="t nav" id="nav4" style="left:823px;letter-spacing:0.571px">Anleitungen</div>
<div class="t nav" id="nav5" style="left:976px;letter-spacing:0.417px">Forum</div>
<div class="t nav" id="nav6" style="left:1093px;letter-spacing:0.403px">Ubakus</div>
<div class="t nav" id="konto" style="left:1506px;letter-spacing:0.420px">Mein Konto</div>

<div class="car" style="left:498px;top:37.5px"></div>
<div class="car" style="left:623px;top:37.5px"></div>
<div class="car" style="left:756px;top:37.5px"></div>
<div class="car" style="left:909px;top:37.5px"></div>
<div class="car" style="left:1025px;top:37.5px"></div>
<div class="car" style="left:1150px;top:37.5px"></div>
</body></html>
